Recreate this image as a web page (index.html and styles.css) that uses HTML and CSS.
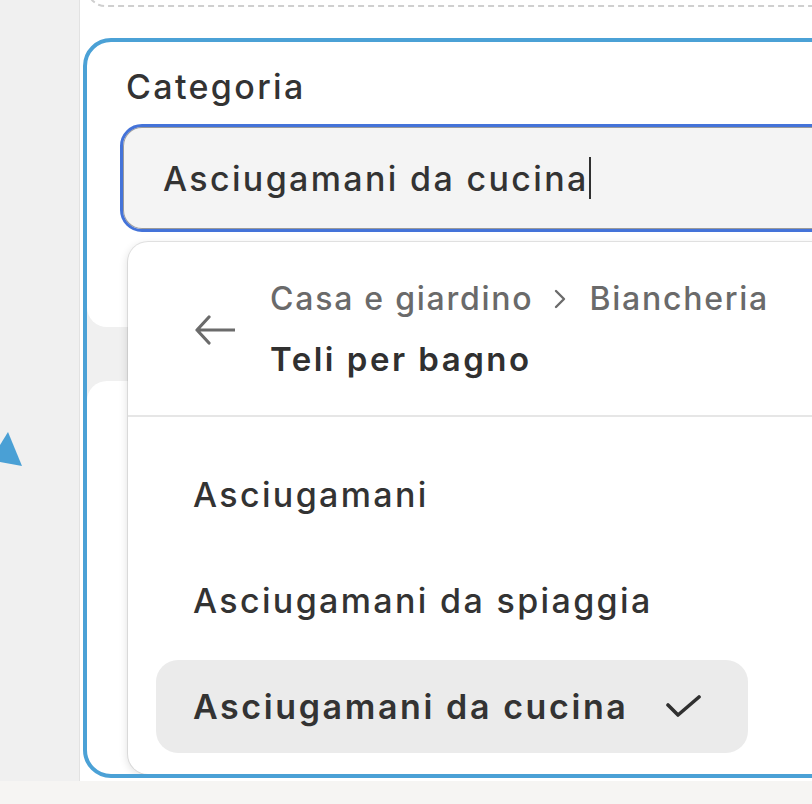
FILE: index.html
```html
<!DOCTYPE html>
<html lang="it">
<head>
<meta charset="utf-8">
<title>Categoria</title>
<link rel="stylesheet" href="styles.css">
</head>
<body>
<div class="screen">
  <aside class="rail">
    <svg class="pointer" width="24" height="40" viewBox="0 0 24 40"><polygon points="0,13 8,0 22,34 0,30" fill="#4aa0d5"/></svg>
  </aside>
  <main class="main">
    <div class="prev"></div>
    <section class="highlight">
      <label class="label">Categoria</label>
      <div class="input"><span class="value">Asciugamani da cucina</span><span class="caret"></span></div>
      <div class="seam">
        <div class="seam-end"></div>
        <div class="seam-start"></div>
      </div>
      <div class="popover">
        <div class="pop-head">
          <svg class="back" width="40" height="30" viewBox="0 0 40 30"><path d="M14 2 L2 15 L14 28 M2 15 H40" fill="none" stroke="#6b6b6b" stroke-width="3.2" stroke-linecap="round" stroke-linejoin="round"/></svg>
          <div class="crumbs">
            <div class="path">Casa e giardino<svg class="chev" width="14" height="22" viewBox="0 0 14 22"><path d="M3 3 L11 11 L3 19" fill="none" stroke="#6b6b6b" stroke-width="2.4" stroke-linecap="round" stroke-linejoin="round"/></svg>Biancheria</div>
            <div class="current">Teli per bagno</div>
          </div>
        </div>
        <ul class="options">
          <li class="option">Asciugamani</li>
          <li class="option">Asciugamani da spiaggia</li>
          <li class="option selected">Asciugamani da cucina<svg class="check" width="36" height="24" viewBox="0 0 36 24"><path d="M2 10 L12 20 L33 2" fill="none" stroke="#303030" stroke-width="3.6" stroke-linecap="round" stroke-linejoin="round"/></svg></li>
        </ul>
      </div>
    </section>
  </main>
  <footer class="strip"></footer>
</div>
</body>
</html>
```
FILE: styles.css
```css
* { box-sizing: border-box; }
html, body { margin: 0; padding: 0; }
body {
  width: 812px;
  height: 804px;
  overflow: hidden;
  font-family: Inter, "Noto Sans", sans-serif;
  color: #303030;
  background: #f6f5f3;
}
.screen {
  display: grid;
  grid-template-columns: 80px 1fr;
  grid-template-rows: 781px 23px;
  height: 804px;
}
.rail {
  position: relative;
  background: #f0f0f0;
  border-right: 1px solid #e2e2e2;
}
.pointer {
  position: absolute;
  left: 0;
  top: 432px;
}
.main {
  background: #fff;
  overflow: hidden;
  padding-left: 3px;
}
.strip {
  grid-column: 1 / 3;
  background: #f6f5f3;
}
.prev {
  height: 44px;
  margin-top: -37px;
  margin-left: 4px;
  margin-right: -40px;
  border: 2px dashed #cfcfcf;
  border-radius: 18px;
}
.highlight {
  position: relative;
  margin-top: 31px;
  margin-right: -60px;
  height: 740px;
  border: 4px solid #4ba1d6;
  border-radius: 28px;
  padding: 25px 0 0 33px;
  overflow: hidden;
}
.label {
  display: block;
  padding-left: 6px;
  font-size: 34px;
  font-weight: 500;
  line-height: 40px;
  letter-spacing: 2.35px;
  color: #333;
}
.input {
  margin-top: 17px;
  height: 108px;
  display: flex;
  align-items: center;
  padding-left: 40px;
  background: #f4f4f4;
  border: 3px solid #4473d9;
  border-radius: 22px;
  box-shadow: inset 0 0 0 1px #9a9a9a;
  font-size: 34px;
  font-weight: 500;
  letter-spacing: 2.35px;
  color: #333;
}
.caret {
  width: 2px;
  height: 42px;
  margin-left: 0;
  background: #303030;
}
.seam {
  margin-top: 75px;
  margin-left: -33px;
  background: #f0f0f0;
  height: 94px;
  display: flex;
  flex-direction: column;
  justify-content: space-between;
}
.seam-end {
  height: 20px;
  background: #fff;
  border-bottom-left-radius: 20px;
}
.seam-start {
  height: 20px;
  background: #fff;
  border-top-left-radius: 20px;
}
.popover {
  position: absolute;
  left: 41px;
  top: 200px;
  right: -40px;
  bottom: 0;
  background: #fff;
  border-radius: 20px;
  box-shadow: 0 0 0 1px rgba(0,0,0,0.09), -1px 2px 8px rgba(0,0,0,0.12);
}
.pop-head {
  height: 175px;
  display: flex;
  align-items: center;
  gap: 35px;
  padding-left: 67px;
  border-bottom: 2px solid #e6e6e6;
}
.back { flex: none; margin-top: 2px; }
.crumbs {
  display: flex;
  flex-direction: column;
}
.path {
  display: flex;
  align-items: center;
  font-size: 32px;
  font-weight: 500;
  line-height: 60px;
  letter-spacing: 1.75px;
  color: #6a6a6a;
}
.chev { margin: 0 22px 0 20px; }
.current {
  font-size: 33px;
  line-height: 60px;
  font-weight: 600;
  letter-spacing: 2.5px;
  color: #303030;
}
.options {
  list-style: none;
  margin: 0;
  padding: 31px 0 0 28px;
  display: flex;
  flex-direction: column;
  align-items: flex-start;
  gap: 13px;
}
.option {
  height: 93px;
  display: flex;
  align-items: center;
  padding: 0 46px 0 37px;
  border-radius: 22px;
  font-size: 34px;
  font-weight: 500;
  letter-spacing: 2.35px;
  color: #333;
}
.option.selected {
  background: #ebebeb;
  font-weight: 600;
  letter-spacing: 2.6px;
}
.check { margin-left: 38px; }
```
